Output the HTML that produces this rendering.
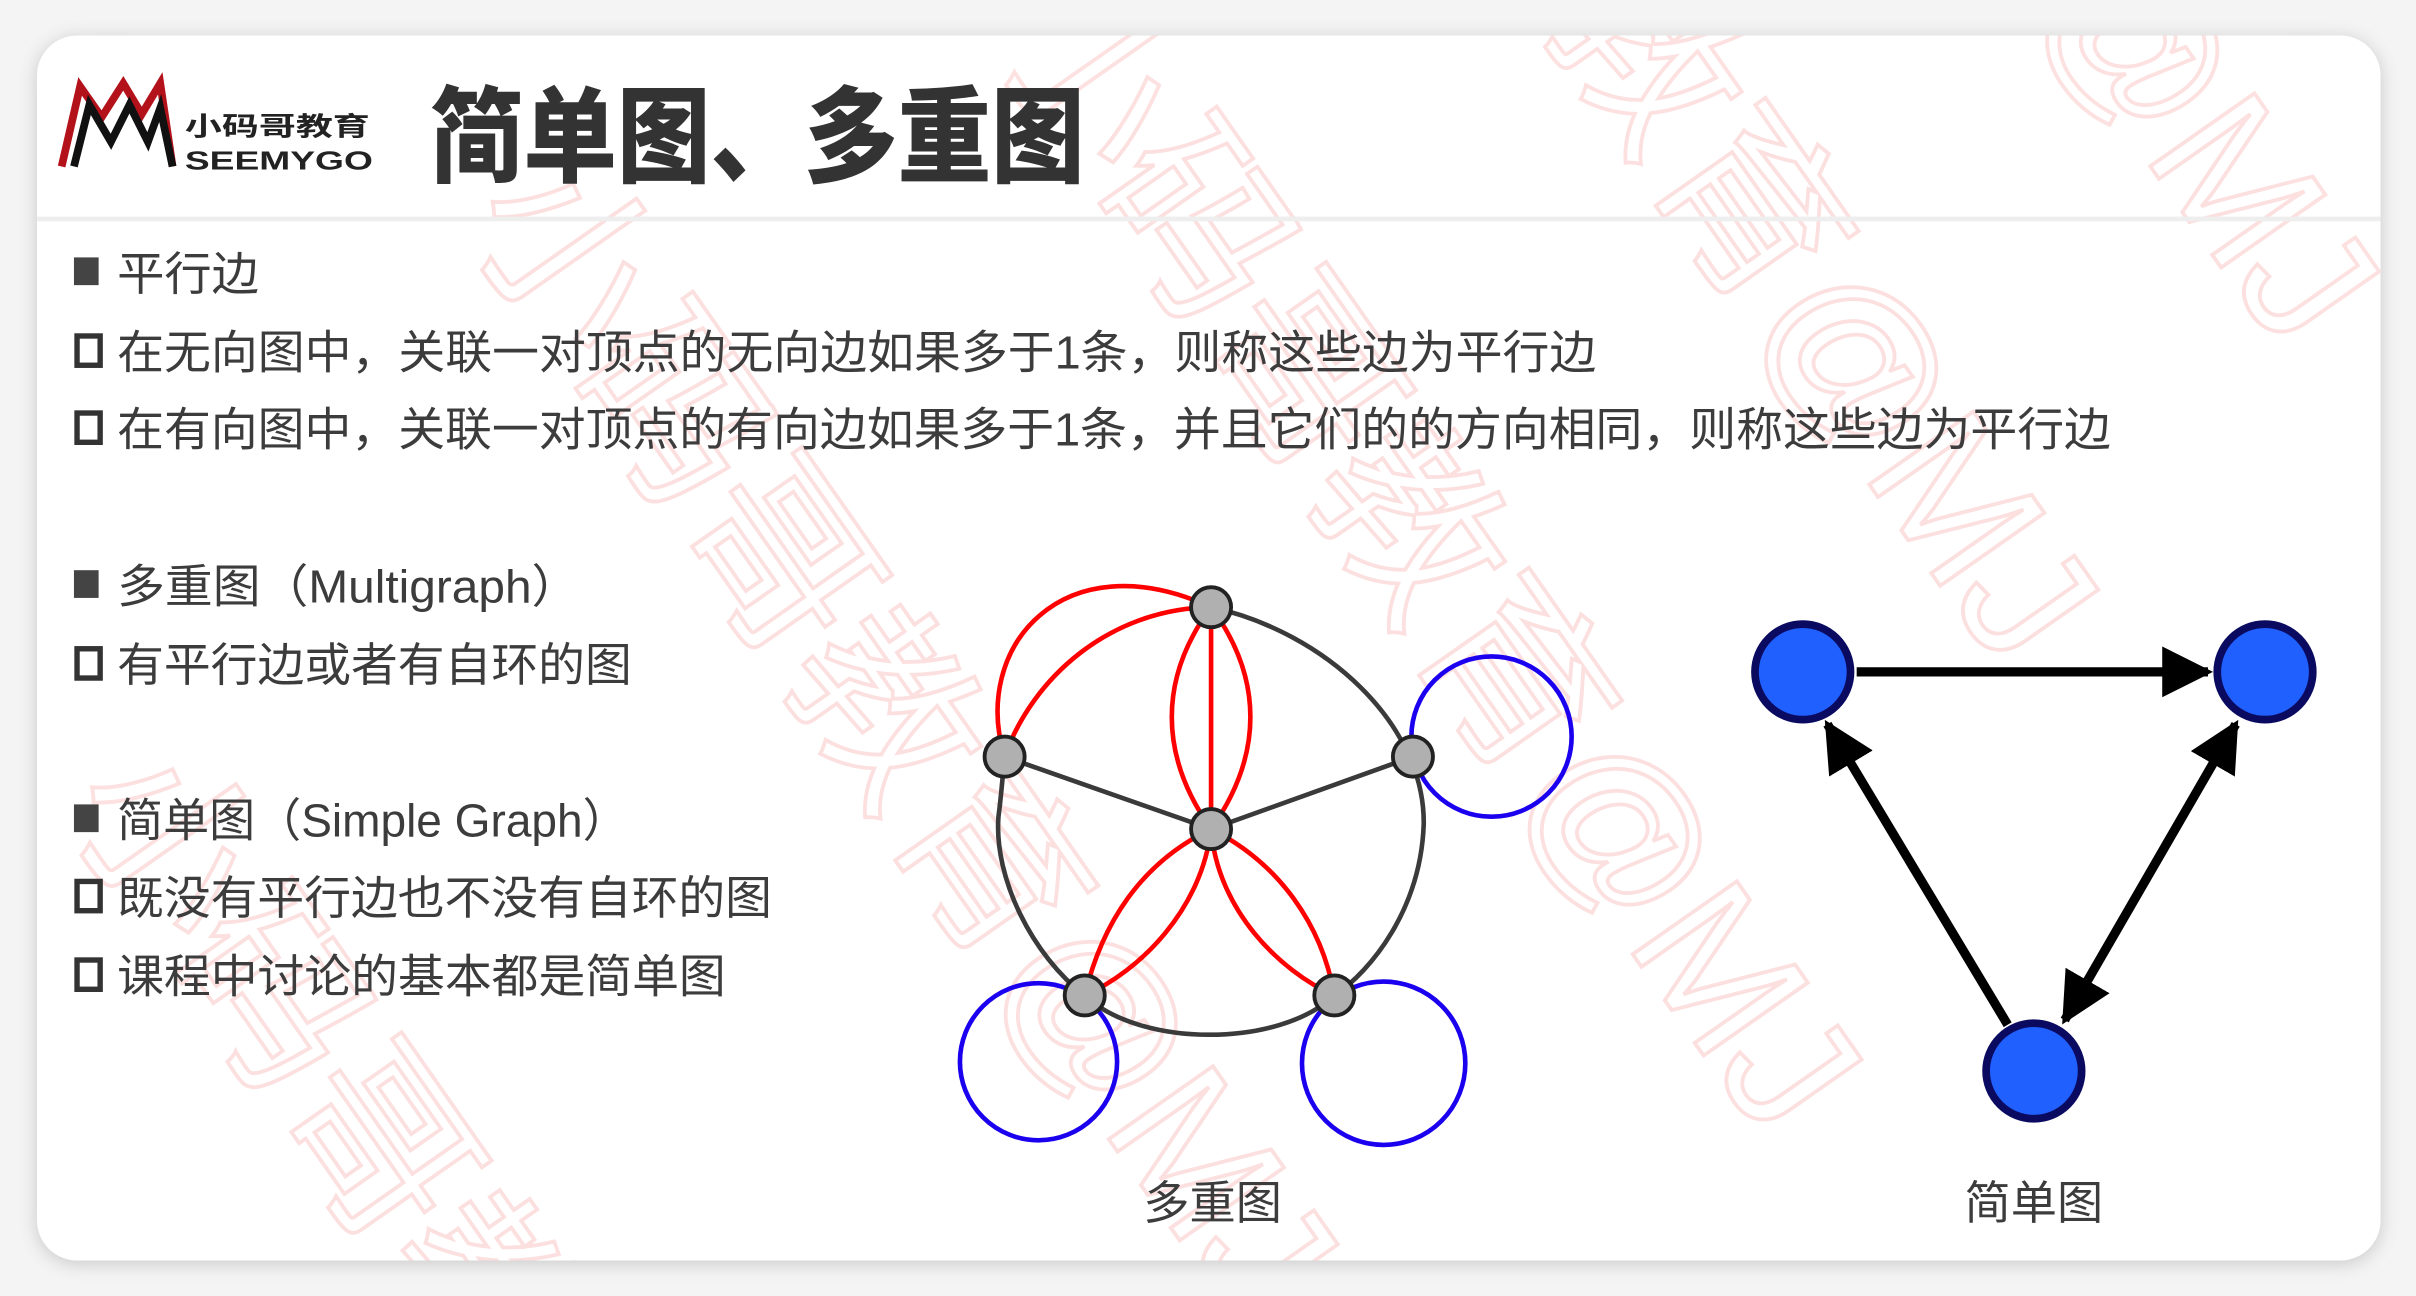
<!DOCTYPE html>
<html><head><meta charset="utf-8"><style>
html,body{margin:0;padding:0;background:#f3f3f3;width:2416px;height:1296px;overflow:hidden}
svg{display:block}
text{font-family:"Liberation Sans","Noto Sans CJK SC",sans-serif}
</style></head><body>
<svg width="2416" height="1296" viewBox="0 0 1568 841" xmlns="http://www.w3.org/2000/svg">
<defs>
<filter id="sh" x="-5%" y="-5%" width="110%" height="110%"><feGaussianBlur stdDeviation="6"/></filter>
<clipPath id="card"><rect x="24" y="23" width="1521" height="795" rx="26"/></clipPath>
<marker id="ar" viewBox="0 0 10 10" refX="9" refY="5" markerWidth="5.5" markerHeight="5.5" orient="auto"><path d="M0,0 L10,5 L0,10 z" fill="#000"/></marker>
<marker id="as" viewBox="0 0 10 10" refX="1" refY="5" markerWidth="5.5" markerHeight="5.5" orient="auto"><path d="M10,0 L0,5 L10,10 z" fill="#000"/></marker>
</defs>
<rect x="0" y="0" width="1568" height="841" fill="#f4f4f4"/>
<rect x="24" y="25" width="1521" height="795" rx="26" fill="#c8c8c8" filter="url(#sh)"/>
<rect x="24" y="23" width="1521" height="795" rx="26" fill="#fff"/>
<g clip-path="url(#card)" stroke-width="2.5" font-size="120" opacity="0.55">
<text transform="translate(300,140) rotate(55)" fill="none" stroke="#fbc8c8">小码哥教育@MJ</text>
<text transform="translate(640,20) rotate(55)" fill="none" stroke="#fbc8c8">小码哥教育@MJ</text>
<text transform="translate(1000,10) rotate(55)" fill="none" stroke="#fbc8c8">教育@MJ</text>
<text transform="translate(1320,0) rotate(55)" fill="none" stroke="#fbc8c8">@MJ</text>
<text transform="translate(40,520) rotate(55)" fill="none" stroke="#fbc8c8">小码哥教育@MJ</text>
</g>
<line x1="24" y1="142" x2="1545" y2="142" stroke="#eeeeee" stroke-width="3"/>
<g>
<path d="M40,108 L52,56 L66,76 L80,54 L92,74 L104,54 L112,108" fill="none" stroke="#b3121b" stroke-width="5"/>
<path d="M48,108 L58,68 L72,92 L84,68 L96,92 L104,70 L112,108" fill="none" stroke="#111" stroke-width="5"/>
<text x="120" y="88" font-size="17" font-weight="700" fill="#222" textLength="120" lengthAdjust="spacingAndGlyphs">小码哥教育</text>
<text x="120" y="110" font-size="17" font-weight="700" fill="#222" textLength="122" lengthAdjust="spacingAndGlyphs">SEEMYGO</text>
</g>
<text x="279" y="113" font-size="68" font-weight="900" fill="#333" textLength="425" lengthAdjust="spacingAndGlyphs">简单图、多重图</text>
<g fill="#3c3c3c" font-size="30">
<rect x="48" y="167" width="16" height="18" fill="#444"/>
<text x="76" y="188" textLength="92" lengthAdjust="spacingAndGlyphs">平行边</text>
<rect x="50" y="218" width="15" height="19" fill="none" stroke="#333" stroke-width="3.5"/>
<text x="76" y="239" textLength="960" lengthAdjust="spacingAndGlyphs">在无向图中，关联一对顶点的无向边如果多于1条，则称这些边为平行边</text>
<rect x="50" y="268" width="15" height="19" fill="none" stroke="#333" stroke-width="3.5"/>
<text x="76" y="289" textLength="1294" lengthAdjust="spacingAndGlyphs">在有向图中，关联一对顶点的有向边如果多于1条，并且它们的的方向相同，则称这些边为平行边</text>
<rect x="48" y="370" width="16" height="18" fill="#444"/>
<text x="76" y="391" textLength="300" lengthAdjust="spacingAndGlyphs">多重图（Multigraph）</text>
<rect x="50" y="421" width="15" height="19" fill="none" stroke="#333" stroke-width="3.5"/>
<text x="76" y="442" textLength="334" lengthAdjust="spacingAndGlyphs">有平行边或者有自环的图</text>
<rect x="48" y="522" width="16" height="18" fill="#444"/>
<text x="76" y="543" textLength="332" lengthAdjust="spacingAndGlyphs">简单图（Simple Graph）</text>
<rect x="50" y="572" width="15" height="19" fill="none" stroke="#333" stroke-width="3.5"/>
<text x="76" y="593" textLength="425" lengthAdjust="spacingAndGlyphs">既没有平行边也不没有自环的图</text>
<rect x="50" y="623" width="15" height="19" fill="none" stroke="#333" stroke-width="3.5"/>
<text x="76" y="644" textLength="395" lengthAdjust="spacingAndGlyphs">课程中讨论的基本都是简单图</text>
<text x="742" y="791" textLength="90" lengthAdjust="spacingAndGlyphs">多重图</text>
<text x="1275" y="791" textLength="90" lengthAdjust="spacingAndGlyphs">简单图</text>
</g>
<g fill="none" stroke-width="3">
<circle cx="968" cy="478" r="52" stroke="#1a00ee"/>
<circle cx="674" cy="689" r="51" stroke="#1a00ee"/>
<circle cx="898" cy="690" r="53" stroke="#1a00ee"/>
<path d="M786,394 C860,410 925,470 924,535 C922,590 890,630 866,646 C830,680 740,680 704,646 C670,620 645,570 648,530 C650,515 651,500 652,491" stroke="#3a3a3a"/>
<path d="M652,491 L786,538 L917,491" stroke="#3a3a3a"/>
<path d="M652,491 C630,420 690,350 786,394" stroke="#f00"/>
<path d="M652,491 C670,440 720,395 786,394" stroke="#f00"/>
<path d="M786,394 L786,538 M786,394 C752,440 752,490 786,538 M786,394 C820,440 820,490 786,538" stroke="#f00"/>
<path d="M786,538 C740,560 715,600 704,646 M786,538 C780,590 740,630 704,646 M786,538 C830,560 858,600 866,646 M786,538 C790,590 830,630 866,646" stroke="#f00"/>
</g>
<g fill="#b0b0b0" stroke="#222" stroke-width="2.5">
<circle cx="786" cy="394" r="13"/><circle cx="652" cy="491" r="13"/><circle cx="917" cy="491" r="13"/>
<circle cx="786" cy="538" r="13"/><circle cx="704" cy="646" r="13"/><circle cx="866" cy="646" r="13"/>
</g>
<g stroke="#000" stroke-width="6" fill="none">
<line x1="1205" y1="436" x2="1433" y2="436" marker-end="url(#ar)"/>
<line x1="1303" y1="665" x2="1186" y2="470" marker-end="url(#ar)"/>
<line x1="1451" y1="470" x2="1340" y2="662" marker-end="url(#ar)" marker-start="url(#as)"/>
</g>
<g fill="#2060ff" stroke="#0a0a60" stroke-width="5">
<circle cx="1170" cy="436" r="31"/><circle cx="1470" cy="436" r="31"/><circle cx="1320" cy="695" r="31"/>
</g>
</svg>
</body></html>
